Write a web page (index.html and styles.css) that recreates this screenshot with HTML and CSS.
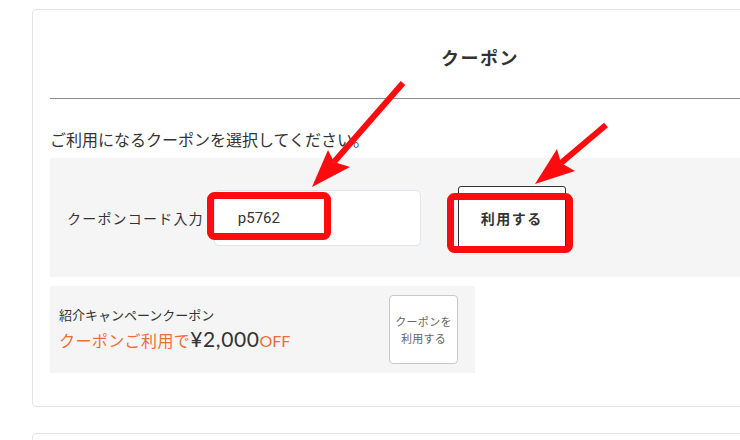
FILE: index.html
```html
<!DOCTYPE html>
<html lang="ja">
<head>
<meta charset="utf-8">
<title>クーポン</title>
<link rel="stylesheet" href="styles.css">
</head>
<body>
<div class="page">
  <section class="card">
    <h2 class="card-title">クーポン</h2>
    <p class="lead">ご利用になるクーポンを選択してください。</p>
    <div class="code-box">
      <span class="code-label">クーポンコード入力</span>
      <input class="code-input" type="text" value="p5762">
      <button class="code-btn" type="button">利用する</button>
    </div>
    <div class="coupon">
      <div class="coupon-text">
        <div class="coupon-name">紹介キャンペーンクーポン</div>
        <div class="coupon-offer"><span class="orange">クーポンご利用で</span><span class="price">¥2,000</span><span class="off">OFF</span></div>
      </div>
      <button class="coupon-btn" type="button">クーポンを<br>利用する</button>
    </div>
  </section>
  <section class="card card-next"></section>
</div>
<svg class="annot" width="740" height="440" viewBox="0 0 740 440">
  <rect x="210.5" y="195.5" width="117" height="41" rx="4" fill="none" stroke="#fd0b0f" stroke-width="7"/>
  <rect x="450.5" y="196.5" width="119" height="53" rx="4" fill="none" stroke="#fd0b0f" stroke-width="7"/>
  <line x1="403" y1="83" x2="334" y2="162" stroke="#fd0b0f" stroke-width="6"/>
  <polygon points="312,187 328,150 334,162 350,167" fill="#fd0b0f"/>
  <line x1="606" y1="125" x2="561" y2="163" stroke="#fd0b0f" stroke-width="6"/>
  <polygon points="535,184 557,149 561,163 575,171" fill="#fd0b0f"/>
</svg>
</body>
</html>
```
FILE: styles.css
```css
html, body {
  margin: 0;
  padding: 0;
  overflow: hidden;
  background: #fff;
}
body {
  font-family: "Noto Sans CJK JP", "Noto Sans", sans-serif;
  color: #333;
}
.page {
  padding: 9px 0 0 32px;
  width: 1000px;
}
.card {
  width: 896px;
  box-sizing: border-box;
  border: 1px solid #e2e2e2;
  border-radius: 4px;
  padding: 0 17px 33px;
}
.card-title {
  margin: 0;
  padding: 35px 0 29px;
  text-align: center;
  font-size: 18px;
  line-height: 24px;
  font-weight: bold;
  letter-spacing: 1.5px;
  color: #333;
  border-bottom: 1px solid #8c8c8c;
}
.lead {
  margin: 28px 0 7px;
  font-size: 16px;
  line-height: 24px;
  color: #333;
}
.code-box {
  background: #f5f5f5;
  height: 119px;
  display: flex;
  align-items: center;
  padding-left: 17px;
}
.code-label {
  font-size: 14px;
  letter-spacing: 1.2px;
  color: #333;
}
.code-input {
  margin-left: 10px;
  width: 207px;
  height: 56px;
  box-sizing: border-box;
  border: 1px solid #dbe7ec;
  border-radius: 5px;
  background: #fff;
  padding: 0 0 0 23px;
  font-family: Roboto, "Noto Sans", sans-serif;
  font-size: 15px;
  color: #333;
  outline: none;
}
.code-btn {
  margin-left: 37px;
  width: 108px;
  height: 64px;
  box-sizing: border-box;
  border: 1px solid #333;
  border-radius: 3px;
  background: #fff;
  font-family: "Noto Sans CJK JP", sans-serif;
  font-size: 14px;
  font-weight: bold;
  letter-spacing: 1.5px;
  color: #333;
  padding: 0;
}
.coupon {
  margin-top: 9px;
  width: 425px;
  box-sizing: border-box;
  background: #f5f5f5;
  display: flex;
  justify-content: space-between;
  align-items: center;
  padding: 9px 17px 9px 9px;
}
.coupon-name {
  font-size: 13px;
  line-height: 20px;
  color: #333;
}
.coupon-offer {
  line-height: 28px;
  white-space: nowrap;
}
.orange {
  font-size: 16px;
  letter-spacing: 0.4px;
  color: #ee6e36;
}
.price {
  font-family: Lato, "Noto Sans", sans-serif;
  font-size: 21px;
  letter-spacing: 0.6px;
  color: #333;
}
.off {
  font-family: Lato, "Noto Sans", sans-serif;
  font-size: 16px;
  color: #ee6e36;
}
.coupon-btn {
  width: 69px;
  height: 69px;
  box-sizing: border-box;
  border: 1px solid #c8c8c8;
  border-radius: 4px;
  background: #fff;
  font-family: "Noto Sans CJK JP", sans-serif;
  font-size: 11px;
  line-height: 17px;
  letter-spacing: 0.3px;
  color: #666;
  padding: 0;
}
.card-next {
  margin-top: 26px;
  height: 200px;
  padding: 0;
}
.annot {
  position: absolute;
  top: 0;
  left: 0;
  pointer-events: none;
}
```
